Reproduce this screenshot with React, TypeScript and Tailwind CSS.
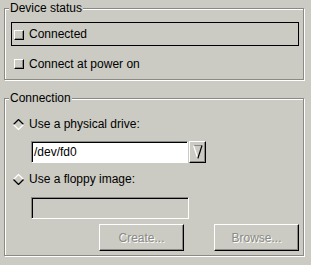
import React from "react";

function Check() {
  return (
    <span className="block w-[10px] h-[10px] shrink-0 border border-t-white border-l-white border-r-black border-b-black shadow-[inset_-1px_-1px_0_#8a8a84] bg-[#cbcbc3]" />
  );
}

function Diamond({ on }: { on: boolean }) {
  const top = on ? "#000" : "#fff";
  const bot = on ? "#fff" : "#000";
  return (
    <svg width="11" height="11" viewBox="0 0 11 11" className="block shrink-0">
      <polyline points="0.5,5.5 5.5,0.5 10.5,5.5" fill="none" stroke={top} strokeWidth="1.3" />
      <polyline points="0.5,5.5 5.5,10.5 10.5,5.5" fill="none" stroke={bot} strokeWidth="1.3" />
    </svg>
  );
}

function Frame({
  title,
  className,
  children,
}: {
  title: string;
  className: string;
  children: React.ReactNode;
}) {
  return (
    <div
      className={
        "relative border border-[#8a8a84] shadow-[1px_1px_0_#fff,inset_1px_1px_0_#fff] " +
        className
      }
    >
      <span className="absolute left-[4px] top-[-8px] px-[1px] bg-[#cbcbc3] leading-[14px]">
        {title}
      </span>
      {children}
    </div>
  );
}

function Button({ label, className }: { label: string; className: string }) {
  return (
    <div
      className={
        "flex items-center justify-center w-[85px] h-[27px] border border-t-white border-l-white border-r-black border-b-black shadow-[inset_-1px_-1px_0_#8a8a84] text-[#8a8a84] [text-shadow:1px_1px_0_#fff] " +
        className
      }
    >
      {label}
    </div>
  );
}

export default function App() {
  return (
    <div className="w-[311px] h-[265px] bg-[#cbcbc3] font-['Liberation_Sans',Arial,sans-serif] text-[12px] leading-[14px] text-black pt-[8px] pl-[4px] overflow-hidden">
      <Frame title="Device status" className="w-[300px] h-[72px]">
        <div className="ml-[6px] mt-[13px] w-[288px] h-[24px] border border-black flex items-center pl-[2px] gap-[5px]">
          <span className="mt-[1px]">
            <Check />
          </span>
          <span>Connected</span>
        </div>
        <div className="ml-[9px] mt-[11px] h-[14px] flex items-center gap-[5px]">
          <Check />
          <span>Connect at power on</span>
        </div>
      </Frame>

      <Frame title="Connection" className="mt-[18px] w-[300px] h-[158px]">
        <div className="ml-[8px] mt-[18px] h-[14px] flex items-center gap-[5px]">
          <Diamond on={true} />
          <span>Use a physical drive:</span>
        </div>
        <div className="ml-[26px] mt-[10px] h-[22px] flex">
          <div className="w-[157px] h-[22px] bg-white border border-t-[#8a8a84] border-l-[#8a8a84] border-b-white border-r-white shadow-[inset_1px_1px_0_#000] flex items-center pl-[2px]">
            /dev/fd0
          </div>
          <div className="ml-[1px] w-[17px] h-[22px] border border-t-white border-l-white border-r-black border-b-black shadow-[inset_-1px_-1px_0_#8a8a84] flex items-center justify-center">
            <svg width="10" height="14" viewBox="0 0 10 14" className="block">
              <line x1="0.5" y1="0.5" x2="9" y2="0.5" stroke="#8a8a84" strokeWidth="1" />
              <line x1="0.5" y1="0.5" x2="4.8" y2="13.5" stroke="#fff" strokeWidth="1.2" />
              <line x1="9" y1="0.5" x2="4.8" y2="13.5" stroke="#000" strokeWidth="1.2" />
            </svg>
          </div>
        </div>
        <div className="ml-[8px] mt-[9px] h-[14px] flex items-center gap-[5px]">
          <Diamond on={false} />
          <span>Use a floppy image:</span>
        </div>
        <div className="ml-[26px] mt-[11px] w-[158px] h-[22px] border border-t-[#8a8a84] border-l-[#8a8a84] border-b-white border-r-white shadow-[inset_1px_1px_0_#000]" />
        <div className="mt-[5px] flex">
          <Button label="Create..." className="ml-[94px]" />
          <Button label="Browse..." className="ml-[30px]" />
        </div>
      </Frame>
    </div>
  );
}
